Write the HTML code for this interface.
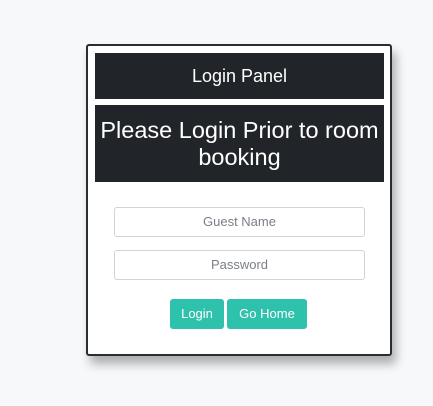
<!DOCTYPE html>
<html><head><style>
body{margin:0;width:433px;height:406px;background:#f7f8fa;font-family:"Liberation Sans",sans-serif;position:relative;overflow:hidden}
.card{position:absolute;left:86px;top:44px;width:302px;height:308px;border:2px solid #2a2d31;border-radius:3px;background:#fff;box-shadow:4px 8px 10px rgba(0,0,0,.3)}
.h1{position:absolute;left:7px;top:7px;width:289px;height:46px;background:#212529;color:#fff;font-size:18px;line-height:46px;text-align:center}
.h2{position:absolute;left:7px;top:59px;width:289px;height:77px;background:#212529;color:#fff;font-size:23.5px;line-height:27px;text-align:center;box-sizing:border-box;padding-top:12px}
.in{position:absolute;left:26px;width:251px;height:30px;box-sizing:border-box;border:1px solid #ced4da;border-radius:3px;color:#7a8088;font-size:13px;line-height:28px;text-align:center}
.b{position:absolute;top:253px;height:30px;background:#2ec1ac;color:#fff;font-size:13px;line-height:30px;text-align:center;border-radius:3px}
</style></head><body>
<div class="card">
<div class="h1">Login Panel</div>
<div class="h2">Please Login Prior to room booking</div>
<div class="in" style="top:161px">Guest Name</div>
<div class="in" style="top:204px">Password</div>
<div class="b" style="left:82px;width:54px">Login</div>
<div class="b" style="left:139px;width:80px">Go Home</div>
</div>
</body></html>
